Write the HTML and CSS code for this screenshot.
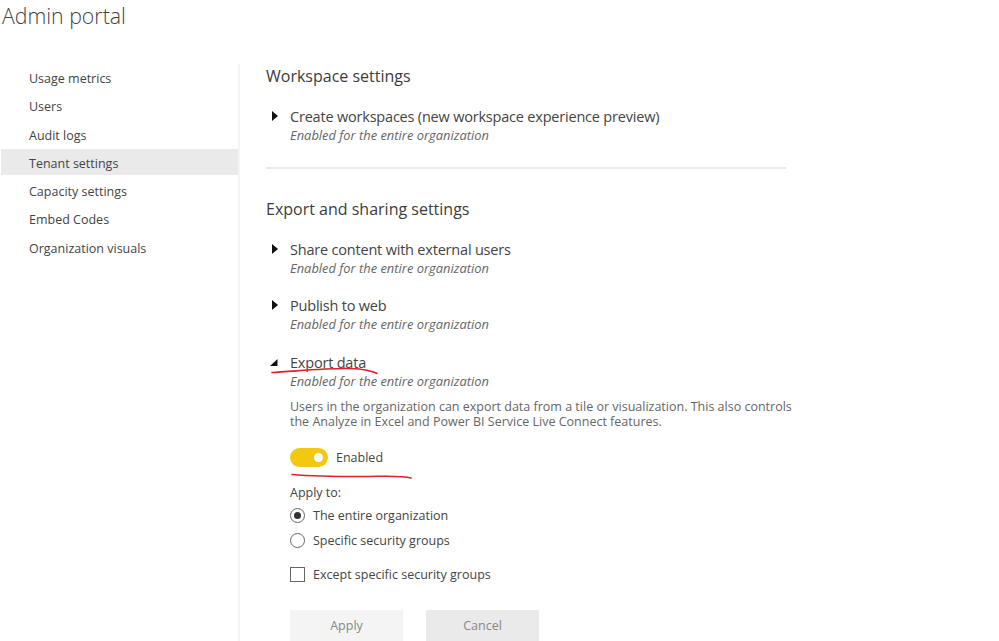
FILE: index.html
```html
<!DOCTYPE html>
<html lang="en">
<head>
<meta charset="utf-8">
<title>Admin portal</title>
<link rel="stylesheet" href="styles.css">
</head>
<body>
<header class="title">Admin portal</header>
<div class="layout">
  <nav class="side">
    <a class="nav-item">Usage metrics</a>
    <a class="nav-item">Users</a>
    <a class="nav-item">Audit logs</a>
    <a class="nav-item active">Tenant settings</a>
    <a class="nav-item">Capacity settings</a>
    <a class="nav-item">Embed Codes</a>
    <a class="nav-item">Organization visuals</a>
  </nav>
  <main class="main">
    <h2 class="heading">Workspace settings</h2>
    <section class="row first">
      <svg class="caret" viewBox="0 0 8 12"><path d="M1 1l6 5-6 5z"/></svg>
      <div class="row-title">Create workspaces (new workspace experience preview)</div>
      <div class="row-sub">Enabled for the entire organization</div>
    </section>
    <hr class="divider">
    <h2 class="heading">Export and sharing settings</h2>
    <section class="row first">
      <svg class="caret" viewBox="0 0 8 12"><path d="M1 1l6 5-6 5z"/></svg>
      <div class="row-title">Share content with external users</div>
      <div class="row-sub">Enabled for the entire organization</div>
    </section>
    <section class="row">
      <svg class="caret" viewBox="0 0 8 12"><path d="M1 1l6 5-6 5z"/></svg>
      <div class="row-title">Publish to web</div>
      <div class="row-sub">Enabled for the entire organization</div>
    </section>
    <section class="row">
      <svg class="caret open" viewBox="0 0 8 7"><path d="M7.5 0v7H0z"/></svg>
      <div class="row-title">Export data</div>
      <div class="row-sub">Enabled for the entire organization</div>
      <p class="desc">Users in the organization can export data from a tile or visualization. This also controls the Analyze in Excel and Power BI Service Live Connect features.</p>
      <div class="toggle-row"><span class="toggle"><span class="knob"></span></span><span>Enabled</span></div>
      <div class="apply-label">Apply to:</div>
      <label class="opt"><span class="radio on"></span>The entire organization</label>
      <label class="opt"><span class="radio"></span>Specific security groups</label>
      <label class="opt check-opt"><span class="check"></span>Except specific security groups</label>
      <div class="buttons"><button class="btn">Apply</button><button class="btn cancel">Cancel</button></div>
    </section>
  </main>
</div>
<svg class="scribble" viewBox="0 0 999 641" aria-hidden="true">
  <path d="M272 372.5C300 371 345 366 362 369.5Q372 371 377 373.5"/>
  <path d="M292 474.5C310 476 335 476.5 360 476.5S400 475 411 478"/>
</svg>
</body>
</html>
```
FILE: styles.css
```css
* { box-sizing: border-box; }
html, body { height: 100%; }
body {
  margin: 0;
  height: 641px;
  overflow: hidden;
  position: relative;
  background: #fff;
  color: #333;
  font-family: "Open Sans", "Noto Sans", sans-serif;
}
.title {
  height: 64px;
  padding: 0 0 0 2px;
  font-size: 21.3px;
  line-height: 32px;
  font-weight: 300;
  color: #444;
}
.layout { display: flex; height: 577px; }
.side {
  width: 240px;
  flex: none;
  border-right: 2px solid #f4f4f4;
  padding-left: 1px;
  display: grid;
  grid-auto-rows: 26px;
  row-gap: 2.25px;
  align-content: start;
}
.nav-item {
  display: flex;
  align-items: center;
  padding: 3px 0 0 28px;
  font-size: 12.5px;
  color: #444;
}
.nav-item.active { background: #eaeaea; }
.main { padding-left: 26px; width: 560px; }
.heading {
  margin: 0;
  font-size: 16px;
  font-weight: 400;
  line-height: 24px;
  color: #3c3c3c;
}
.row { position: relative; padding-left: 24px; margin-top: 19.3px; }
.row.first { margin-top: 19px; }
.caret { position: absolute; left: 5px; top: 3px; width: 8px; height: 12px; fill: #111; }
.caret.open { left: 4px; top: 6px; width: 8px; height: 7px; }
.row-title { font-size: 14.5px; line-height: 20px; color: #444; letter-spacing: -0.2px; }
.row-sub { margin-top: -1px; font-size: 12.9px; line-height: 18px; font-style: italic; color: #666; }
.divider { border: 0; height: 2px; background: #eaeaea; margin: 23px 0 28px; width: 520px; }
.desc { margin: 9px 0 0; font-size: 12.5px; line-height: 15px; color: #666; width: 510px; }
.toggle-row { display: flex; align-items: center; gap: 8px; margin-top: 20px; height: 18px; font-size: 12.5px; color: #444; }
.toggle { width: 38px; height: 19px; border-radius: 10px; background: #f2c811; position: relative; }
.knob { position: absolute; right: 5px; top: 5px; width: 9px; height: 9px; border-radius: 50%; background: #fff; }
.apply-label { margin: 19px 0 8px; font-size: 12.5px; line-height: 13px; color: #444; }
.opt { display: flex; align-items: center; gap: 8px; font-size: 12.5px; color: #444; height: 18px; margin-top: 7px; }
.check-opt { margin-top: 16px; }
.radio { width: 15px; height: 15px; border: 1px solid #666; border-radius: 50%; position: relative; background: #fff; }
.radio.on::after { content: ""; position: absolute; left: 3px; top: 3px; width: 7px; height: 7px; border-radius: 50%; background: #333; }
.check { width: 15px; height: 15px; border: 1px solid #666; background: #fff; }
.buttons { display: flex; gap: 23px; margin-top: 26px; }
.btn {
  width: 113px;
  height: 31px;
  border: 0;
  background: #f4f4f4;
  color: #888;
  font: inherit;
  font-size: 12.5px;
  padding: 0;
}
.btn.cancel { background: #eaeaea; }
.scribble { position: absolute; left: 0; top: 0; width: 999px; height: 641px; pointer-events: none; }
.scribble path { fill: none; stroke: #e0212b; stroke-width: 1.6; stroke-linecap: round; }
```
